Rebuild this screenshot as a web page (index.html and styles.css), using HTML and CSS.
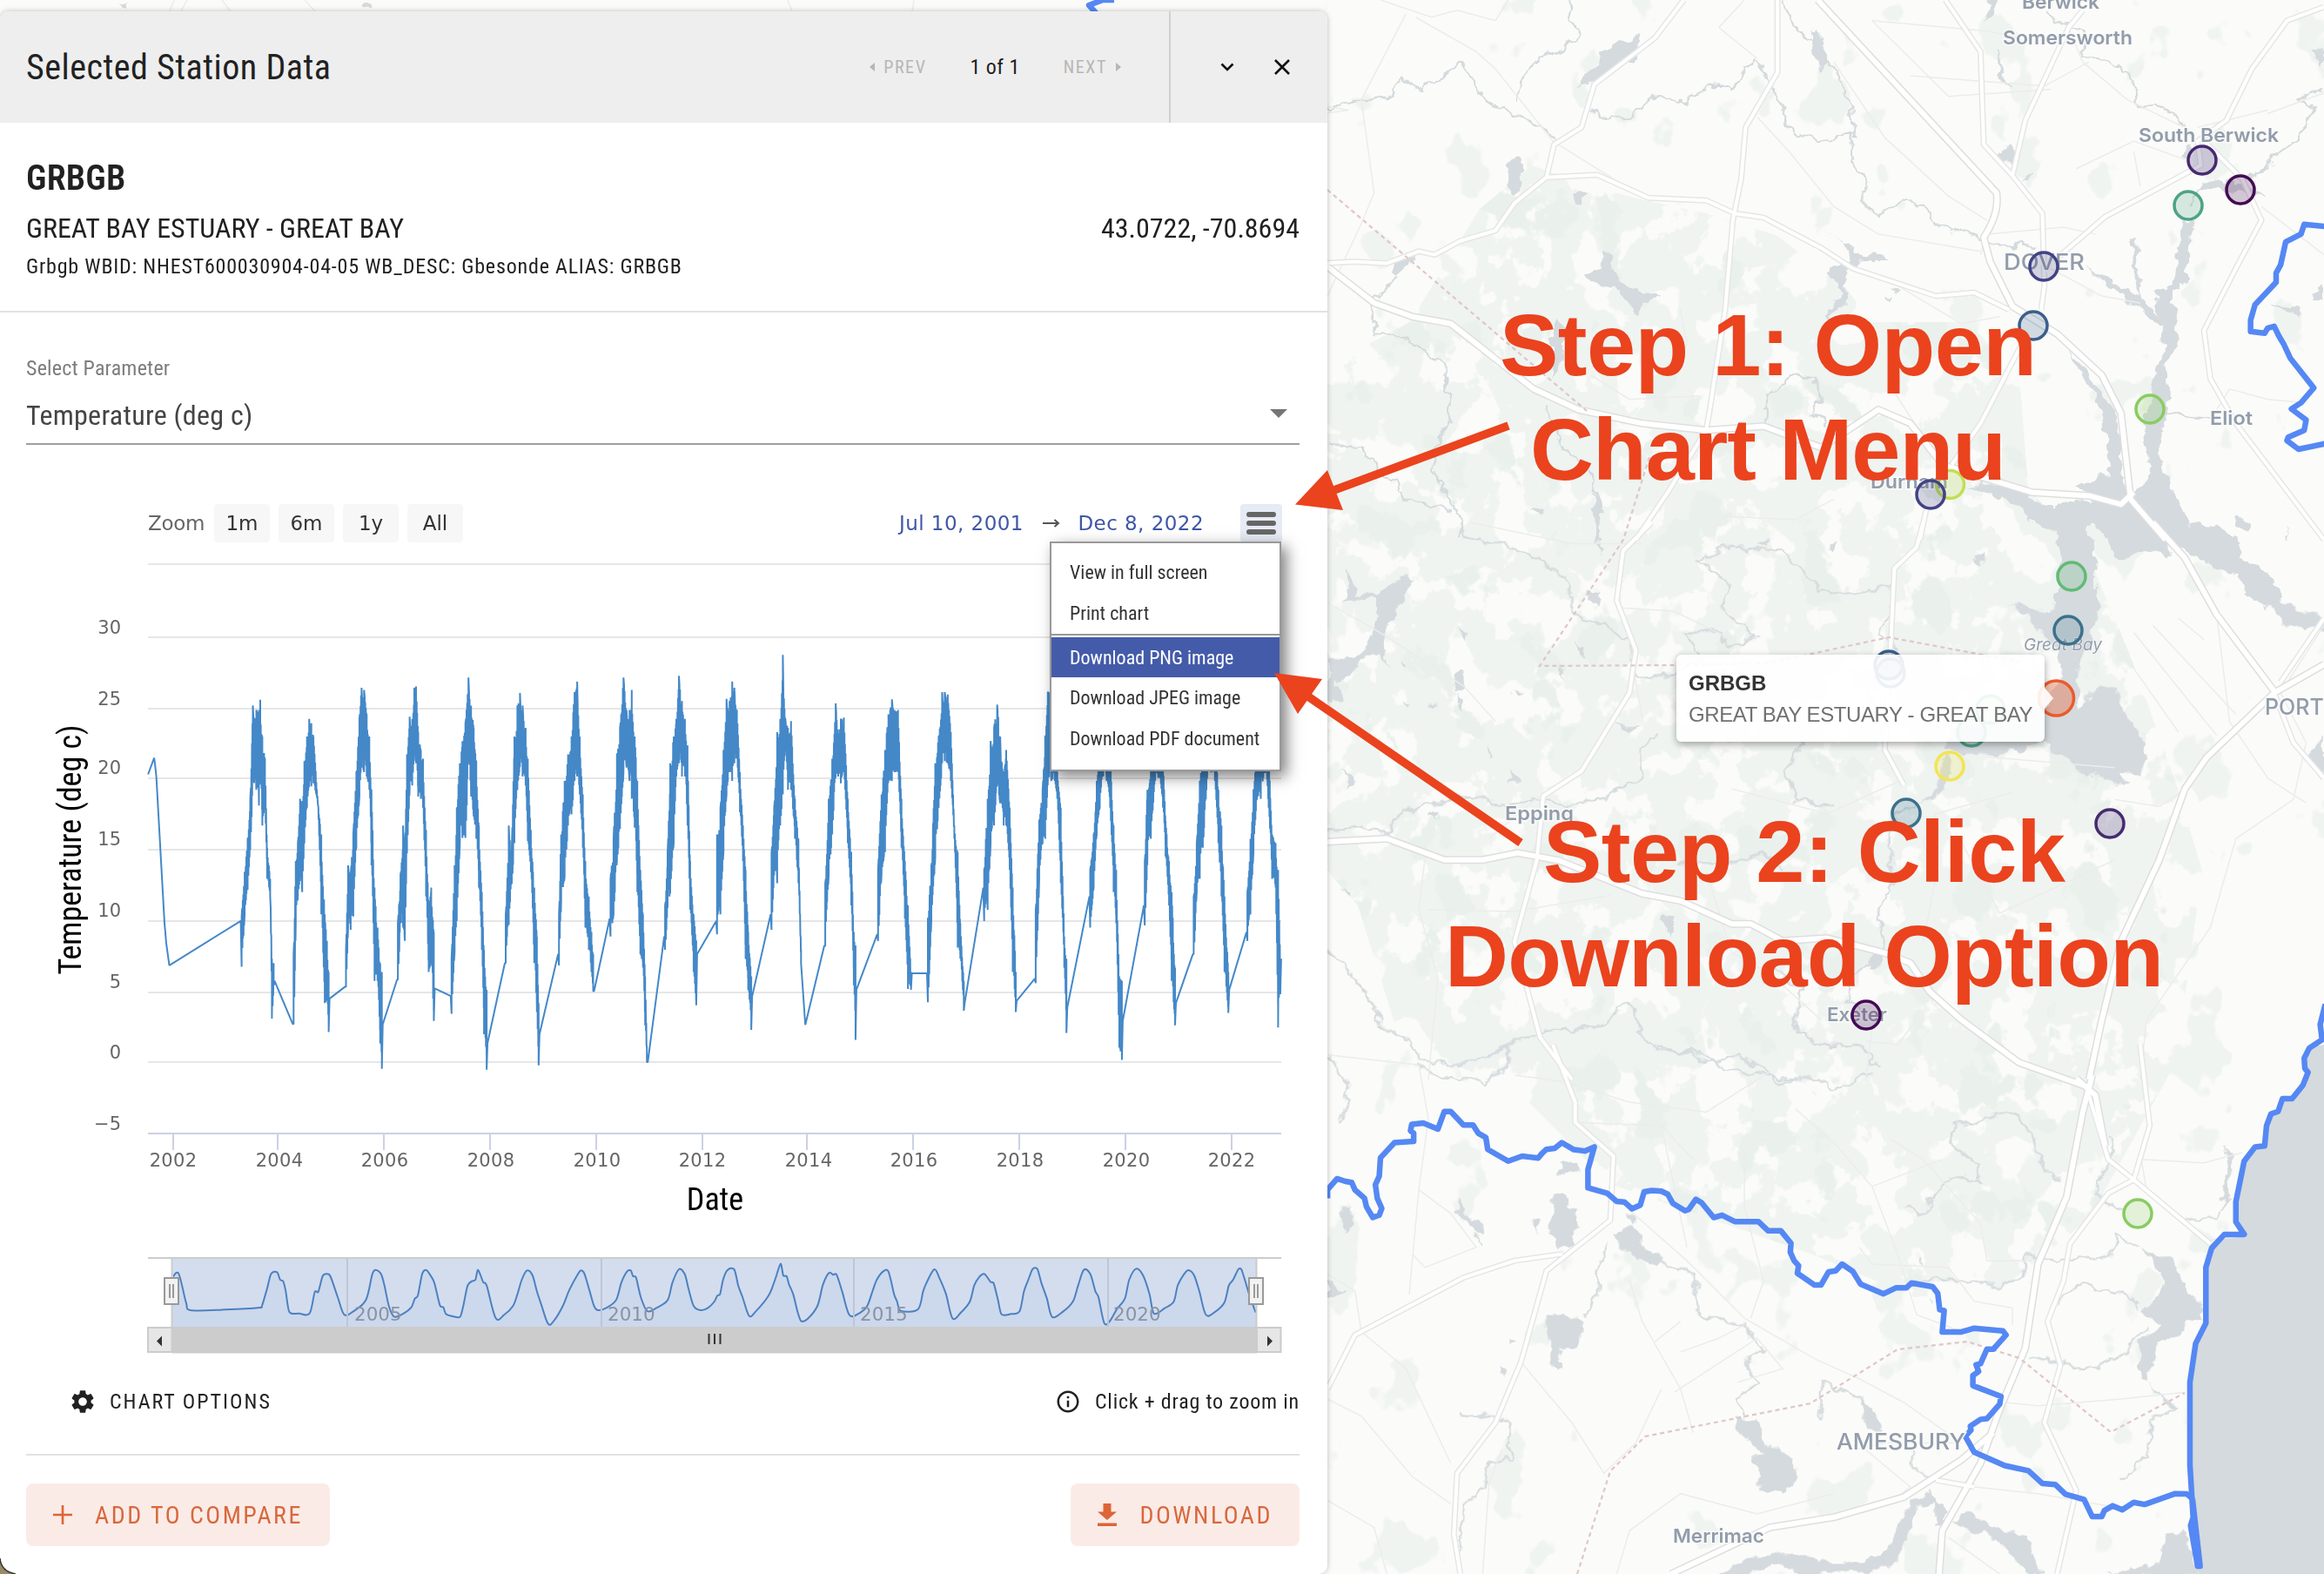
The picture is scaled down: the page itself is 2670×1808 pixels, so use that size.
FILE: index.html
```html
<!DOCTYPE html>
<html lang="en">
<head>
<meta charset="utf-8">
<title>Selected Station Data</title>
<link rel="stylesheet" href="styles.css">
</head>
<body>
<svg class="map" width="2670" height="1808" viewBox="0 0 2670 1808">
  <defs>
    <filter id="woods" x="0" y="0" width="100%" height="100%" color-interpolation-filters="sRGB">
      <feTurbulence type="fractalNoise" baseFrequency="0.021 0.018" numOctaves="5" seed="11"/>
      <feColorMatrix values="0 0 0 0 .937  0 0 0 0 .957  0 0 0 0 .945  26 0 0 0 -11.300"/>
    </filter>
    <filter id="thickets" x="0" y="0" width="100%" height="100%" color-interpolation-filters="sRGB">
      <feTurbulence type="fractalNoise" baseFrequency="0.016 0.014" numOctaves="5" seed="23"/>
      <feColorMatrix values="0 0 0 0 .918  0 0 0 0 .945  0 0 0 0 .925  24 0 0 0 -15.600"/>
    </filter>
    <filter id="glades" x="0" y="0" width="100%" height="100%" color-interpolation-filters="sRGB">
      <feTurbulence type="fractalNoise" baseFrequency="0.014 0.012" numOctaves="4" seed="4"/>
      <feColorMatrix values="0 0 0 0 .937  0 0 0 0 .957  0 0 0 0 .945  26 0 0 0 -17"/>
    </filter>
    <filter id="shore" filterUnits="userSpaceOnUse" x="0" y="0" width="2670" height="1808">
      <feTurbulence type="fractalNoise" baseFrequency="0.06" numOctaves="3" seed="5"/>
      <feDisplacementMap in="SourceGraphic" scale="16" xChannelSelector="R" yChannelSelector="G"/>
    </filter>
    <clipPath id="dense"><path d="M1525 420 1620 370 1700 240 1760 190 1830 215 1890 230 1960 245 2040 270 2120 330 2150 370 2260 370 2320 430 2330 560 2400 640 2450 760 2500 900 2530 1000 2500 1220 2400 1400 2300 1480 2200 1490 2080 1440 1850 1360 1740 1250 1610 1200 1560 1040 1525 1000z"/></clipPath>
  </defs>
  <rect width="2670" height="1808" fill="#fbfbf9"/>
  <rect x="1500" width="1170" height="1808" filter="url(#glades)"/>
  <g clip-path="url(#dense)"><rect x="1500" width="1170" height="1808" filter="url(#woods)"/><rect x="1500" width="1170" height="1808" filter="url(#thickets)"/></g>

  <path class="ocean" transform="translate(1520 1200) scale(.73341 .38773)" d="M1568 0 1550 5 1537 40 1543 82 1535 120 1518 160 1503 160 1496 198 1485 205 1478 240 1475 300 1460 303 1443 345 1430 465 1430 525 1443 562 1412 562 1392 603 1383 660 1383 825 1367 885 1358 1000 1358 1245 1362 1345 1372 1568 1568 1568z"/>
  <g class="water" filter="url(#shore)">
    <g transform="scale(.49744 .34435)"><path d="M280 0 298 0 295 30 285 20zM840 12 852 10 853 32 842 36z"/></g>
    <g transform="translate(1520 0) scale(.73341 .39541)">
      <path d="M485 105 497 98 490 170 465 190 440 235 400 250 410 220 428 190 440 150z"/>
      <path d="M445 730 470 825 500 850 528 865 500 880 495 915 470 870 455 830 430 830 410 790 435 780z"/>
      <path d="M360 930 380 960 375 1060 360 1100z"/>
      <path d="M298 465 310 462 313 490 303 560 292 570 290 490z"/>
      <path d="M762 80 775 90 790 180 785 205 770 170z"/>
      <path d="M110 760 140 735 135 765 115 800 105 790zM396 565 412 560 405 590 393 590z"/>
      <path d="M1065 445 1070 415 1080 440 1090 480 1070 475zM1040 0 1050 0 1050 40 1040 60zM1050 140 1055 150 1065 210 1078 240 1062 235z"/>
      <path d="M1548 150 1568 145 1568 200zM1545 850 1568 830 1568 870 1550 870z"/>
    </g>
    <g transform="translate(2050 100) scale(.3827)">
      <path d="M1195 395 1228 405 1215 470 1215 580 1185 605 1160 610 1160 650 1178 680 1180 780 1148 830 1152 930 1142 1020 1120 1080 1140 1150 1185 1250 1215 1310 1300 1318 1360 1355 1368 1415 1420 1440 1492 1510 1500 1570 1450 1570 1380 1520 1340 1450 1280 1440 1200 1400 1160 1365 1165 1412 1100 1390 1010 1418 980 1400 960 1335 925 1310 895 1330 935 1365 940 1570 812 1570 820 1480 830 1400 820 1330 775 1325 735 1300 700 1250 545 1192 600 1192 680 1200 760 1235 810 1260 840 1245 930 1235 870 1192 920 1190 950 1155 980 1160 970 1080 945 950 915 895 875 860 860 800 900 850 950 920 992 980 1012 1080 1020 1190 1060 1225 1085 1200 1100 1160 1075 1020 1108 920 1120 830 1142 780 1130 720 1060 665 1030 645 990 605 900 548 960 565 1040 615 1060 628 1040 455 1055 455 1068 640 1110 665 1132 690 1112 615 1150 598 1172 580z"/>
      <path d="M80 405 150 450 205 480 230 510 280 495 310 520 240 520 210 535 180 570 190 650 150 670 130 720 125 680 170 630 165 590 130 560 200 520 180 470z"/>
      <path d="M650 200 675 165 690 210 680 235 630 210zM710 285 745 255 735 275zM1250 290 1300 270 1390 300 1440 330 1380 320 1300 300 1250 315zM1200 170 1220 170 1220 210 1200 200zM300 630 325 620 315 645zM320 590 350 610 340 620zM1350 1290 1400 1310 1395 1330 1360 1320zM1495 1350 1508 1325 1500 1360zM570 1400 600 1400 590 1430zM130 1370 160 1350 145 1390zM1460 655 1560 665 1555 685 1480 665z"/>
    </g>
    <g transform="translate(1525 560) scale(.3827)">
      <path d="M60 240 80 280 90 320 160 322 190 290 240 268 262 275 230 310 225 345 190 400 172 445 188 540 165 500 110 512 60 560 20 580 50 640 0 640 0 515 60 520 110 490 130 430 150 380 140 335 90 332 55 350 60 300z"/>
      <path d="M398 422 428 440 405 462zM370 555 405 545 412 600 385 615zM550 845 582 880 538 885zM860 690 900 720 947 715 900 738zM780 320 822 305 812 362 780 345zM608 70 652 58 640 85zM798 15 822 50 815 205 808 160zM1005 1290 1045 1285 1030 1340zM300 660 335 645 320 665zM550 615 590 615 565 630zM230 520 240 535 228 540zM395 620 405 680 385 650zM230 650 260 655 240 665zM700 530 718 540 712 568zM750 470 772 475 770 515 755 500zM300 990 335 970 325 995zM1300 170 1330 150 1320 180zM40 1215 75 1210 60 1225zM45 840 75 880 70 910 55 870zM480 800 492 770 490 805z"/>
    </g>
    <g transform="translate(1520 600) scale(.73341 .40816)">
      <path d="M1145 225 1213 225 1216 240 1205 330 1180 400 1185 520 1200 480 1215 465 1245 470 1252 530 1292 620 1282 710 1250 705 1262 740 1240 735 1190 705 1150 650 1130 615 1060 655 1000 650 975 640 985 590 1080 545 1130 520 1160 430 1150 360 1115 290 1080 235 1140 250z"/>
      <path d="M1480 230 1515 230 1568 270 1568 310 1500 280z"/>
      <path d="M975 650 985 700 968 770 930 790 960 760 965 700z"/>
      <path d="M860 1210 875 1220 870 1250 855 1260zM1020 100 1035 95 1030 130zM790 70 800 45 800 75zM1545 660 1568 600 1568 720 1550 700z"/>
    </g>
    <g transform="translate(1520 1200) scale(.73341 .38773)">
      <path d="M370 350 400 345 405 370 370 382zM360 445 375 440 385 475 400 490 395 590 370 600 355 560zM213 450 222 500 245 520 252 560 235 550 208 490zM328 520 336 515 336 560 328 550z"/>
      <path d="M350 795 375 800 410 820 400 880 375 905 375 955 355 950 360 880 350 840zM7 700 35 730 20 750 7 750zM25 475 45 480 43 540 35 560z"/>
      <path d="M450 560 480 540 500 560 500 600 530 630 525 660 480 620zM475 490 495 530 485 540zM278 960 288 965 285 990zM295 865 310 875 300 885z"/>
      <path d="M640 1100 680 1110 700 1190 740 1230 742 1280 720 1330 685 1320 675 1220 695 1215 650 1150zM835 1040 860 1080 875 1145 855 1140z"/>
      <path d="M1280 610 1330 640 1350 700 1350 740 1380 780 1378 820 1350 815 1345 860 1305 890 1290 1000 1340 1080 1330 1080 1280 980 1280 880 1310 820 1285 790 1310 740 1315 680z"/>
      <path d="M620 1575 660 1520 720 1505 780 1530 850 1530 890 1480 910 1380 950 1325 975 1360 975 1430 960 1420 960 1350 930 1370 900 1530 860 1560 750 1575 710 1535 660 1575zM985 1420 1010 1390 1060 1430 1100 1450 1125 1575 1110 1575 1070 1500 1040 1450zM1320 1460 1350 1440 1375 1575 1230 1575 1310 1530z"/>
      <path d="M1410 300 1425 320 1415 480 1405 460 1415 380zM928 640 936 645 934 660zM955 740 960 760 955 765z"/>
    </g>
  </g>

  <g class="streams" filter="url(#shore)">
    <g transform="translate(1520 0) scale(.73341 .39541)">
      <path d="M7 320 40 300 70 285 110 280 120 225 155 260 190 215 218 175 240 260 270 310 297 330 330 350 363 410M385 0 390 60 400 90 375 140 330 180 310 240 300 290"/>
      <path d="M415 320 440 340 475 350 520 280 545 280 570 305 600 250 640 250 675 175 700 240 720 320 735 390 770 410 830 390 830 460 850 530 850 600 870 625 910 580 940 600 960 650 1020 680 1060 710 1120 720"/>
      <path d="M720 0 740 80 775 130 800 210 820 260 835 400M80 970 80 870 120 800M80 970 130 980 190 1060 200 1220 170 1300 180 1400 215 1500 210 1568"/>
      <path d="M1135 30 1150 70 1190 90 1190 160 1240 190 1270 230 1275 300 1330 320 1360 400M1568 260 1530 290 1550 320 1530 400 1500 440 1470 500 1380 540 1358 600M1320 1200 1390 1210"/>
      <path d="M690 1240 695 1150 740 1085 770 1100 780 1160 760 1200 790 1230M350 1180 370 1290 420 1380 430 1450 430 1568M7 1290 60 1300 100 1380 130 1450 200 1480"/>
    </g>
    <g transform="translate(1520 600) scale(.73341 .40816)">
      <path d="M215 0 215 40 270 55 320 90 380 150 390 250 450 300 480 340 490 430 550 430 590 380 570 310 620 310 640 350 680 320 620 240 640 180 590 110 630 70 720 80 780 190 840 200 890 180 890 240 870 310 900 360"/>
      <path d="M7 870 50 860 100 870 130 810 190 780 240 770 290 800 340 780 380 800 430 780 500 720 500 640 520 600M750 620 725 700 740 780 800 800M930 790 890 830 890 920 890 1020 870 1100 880 1200 830 1280 820 1350 860 1390"/>
      <path d="M560 960 630 960 690 930 720 980M290 1470 350 1430 440 1420 480 1350 490 1410 520 1480 600 1500 640 1540 740 1568M700 1250 750 1310 740 1420 770 1470 840 1470 870 1530M7 1200 80 1350 90 1420 130 1450 150 1510 200 1530 260 1500 290 1470"/>
    </g>
    <g transform="translate(1520 1200) scale(.73341 .38773)">
      <path d="M520 0 560 20 600 50 650 35 690 65 710 110 760 95 800 130 860 85M7 30 40 130 40 180 20 240M150 60 180 105 250 110 290 60 290 0"/>
      <path d="M500 600 530 650 580 680 590 800 660 830 690 900 660 950 680 1000 650 1050 660 1100M240 560 250 600M440 590 430 680 430 740 410 800M215 1090 250 1100 290 1110 295 1225 260 1240 250 1310 220 1360 215 1500"/>
      <path d="M910 485 940 500 980 390 1030 405 1030 360 990 310 990 240 1030 230 1050 205 1090 205 1120 300 1130 370 1160 405M925 710 960 690 1060 720 1100 690 1100 620 1150 640 1240 620 1240 560 1280 600M1150 770 1180 710 1260 740 1280 780M1110 920 1190 965 1250 920 1290 840M1240 280 1210 450 1260 500M1340 520 1400 510 1420 460M1340 1080 1300 1100 1290 1230 1250 1280M780 1000 820 1030 845 1060M925 1200 920 1250 960 1290M780 1000 780 1110"/>
    </g>
  </g>

  <g class="lanes">
    <g transform="translate(1520 0) scale(.73341 .39541)">
      <path d="M90 0 170 50 210 30 270 60 290 0M130 40 60 290 80 560 60 650 7 860M145 50 240 150 270 200 360 410 490 560M7 310 40 320 0 330M620 80 660 0M620 80 680 170M680 340 730 440 800 600 870 680 1030 730"/>
      <path d="M860 60 1040 90 1090 110M860 60 980 280 1140 260M1170 90 1190 180 1260 290 1360 380M800 180 880 400 980 570 1040 640M920 220 1130 250 1200 180M1180 490 1270 410 1360 470M1270 440 1280 540M1480 330 1568 270M1370 370 1480 320"/>
      <path d="M1030 740 1040 680 1160 660 1210 680M1130 770 1220 860 1280 880M1400 1190 1420 1130 1480 1160 1540 1170M1470 600 1568 740M1100 960 1030 1240 985 1350M895 1140 930 1240M560 900 570 1000 540 1100M860 800 900 830 1000 940 1060 920M420 1090 480 1160 590 1150M590 1568 630 1500 740 1510 800 1450"/>
    </g>
    <g transform="translate(1520 600) scale(.73341 .40816)">
      <path d="M0 220 80 300 220 460 270 560M230 0 390 60 500 60M460 240 550 250 640 330M160 940 150 1090 180 1280 165 1568M165 1090 300 1095 450 1050M340 770 260 890M1080 760 960 820 940 900 960 1000 940 1180M1240 780 1310 800 1360 740M1040 660 1240 690M1400 260 1420 560 1480 720 1540 790M1568 290 1500 480 1540 620 1520 780 1430 890 1390 1140 1290 1400 1280 1568"/>
      <path d="M1270 310 1400 600M1300 290 1430 540M1340 270 1380 330M1250 360 1340 590M930 1400 900 1470 850 1460M600 980 640 1210 700 1270 780 1400M860 1430 850 1568M480 350 500 550M640 750 790 820 900 730M1000 900 1060 1100 1240 950"/>
    </g>
    <g transform="translate(1520 1200) scale(.73341 .38773)">
      <path d="M7 30 150 60 165 220 150 430 135 740M140 620 160 660 240 600 200 500 150 430M7 680 50 730 60 850 130 960 200 1240M7 1050 60 1100 140 1280 200 1360M300 90 380 110 480 170 600 200 700 80M390 230 530 240 580 340M530 240 570 600M480 490 570 640 660 810 770 930M480 700 500 820 560 1020 580 1150M730 250 660 310 660 480 690 700 670 810M520 880 560 820M560 910 620 870 660 830M550 1030 680 870 720 960 650 1000M310 940 390 1120 440 1270 490 1180 530 1020"/>
      <path d="M740 190 800 290 860 420 900 620 930 800 1000 850M860 420 970 340M890 280 940 340 1030 530 1040 640 1110 640M770 930 840 990 910 1060 1000 1180M840 600 860 650 980 660 1020 760 1080 780 1080 830M7 1350 80 1430 100 1568M250 1568 260 1300 280 1200M460 1568 480 1440 560 1330 680 1390 800 1330M1280 340 1380 350 1440 320M1280 320 1290 430M1380 580 1430 570M1070 1060 1120 1070 1250 1050 1350 1030M1000 1180 880 1180 830 1200M850 1200 920 1310 900 1340M1020 1310 1120 1330 1240 1370M980 1460 1060 1568"/>
    </g>
    <path d="M195 13 200 0M208 13 215 0M905 0 910 13M1050 0 1048 13M255 0 265 13M350 0 362 13"/>
  </g>

  <g id="roads">
    <g transform="translate(1520 0) scale(.73341 .39541)">
      <path class="road minor" d="M0 765 50 760 100 765 150 730 175 740 215 700 270 670 300 590 350 515 430 508 510 575 600 582 645 620 690 632 780 720 830 780 960 860 1020 850 1075 900M565 0 520 110 425 245 405 370 362 420 350 515M712 0 712 210 662 370 655 520 642 640 630 900 605 1200 600 1250 540 1430 490 1568M975 0 1030 150 1035 420 1080 510 1127 620 1130 830 1125 900M1190 30 1168 80 1100 350 1080 510M1568 20 1510 60 1455 200 1415 350 1370 410 1375 480 1225 630 1150 750M1375 400 1440 520 1470 640 1430 780 1380 960 1390 1100 1430 1230 1568 1568M1100 980 1030 1230 985 1350M945 1480 935 1568"/>
      <path class="road" d="M0 765 80 880 140 920 200 940 330 1130 400 1190 500 1230 600 1250 690 1238 780 1300 830 1240 870 1190 920 1230 970 1350 1110 1430 1200 1440 1250 1465 1270 1430"/>
      <path class="road" d="M775 0 1055 560Q1060 620 1035 690L1045 760 1080 890 1150 970 1220 1090 1250 1200 1265 1450 1320 1568"/>
    </g>
    <g transform="translate(1520 600) scale(.73341 .40816)">
      <path class="road minor" d="M515 0 470 80 460 220 490 360 480 480 405 700 345 770 335 950 300 1180 340 1450 390 1568M940 0 930 70 895 130 890 320 880 640 910 740M1490 480 1520 620 1568 720M1568 270 1500 450"/>
      <path class="road" d="M0 900 100 890 190 950 250 950 305 930 370 952 500 1045 560 1065 640 1130 670 1130 720 1178 790 1170 880 1212 920 1240 950 1320 1000 1400 1090 1520 1200 1590"/>
      <path class="road" d="M1300 0 1350 100 1400 260 1490 475M1568 400 1490 480 1385 660 1350 750 1310 950 1250 1180 1220 1400 1200 1568"/>
    </g>
    <g transform="translate(1520 1200) scale(.73341 .38773)">
      <path class="road minor" d="M360 0 395 170 395 230 455 330 450 520 350 670 310 940 270 1120 210 1270 205 1450 215 1568M375 620 300 640 220 690 50 860 7 1020M1280 0 1295 240 1270 400 1230 440 1170 590 1160 700 1135 820 1155 950 1130 1120 1180 1320 1150 1568M1195 120 1230 340 1270 400 1390 590M960 1290 1020 1310"/>
      <path class="road" d="M545 1568 700 1430 800 1400 910 1340 1000 1230 1050 1150"/>
      <path class="road" d="M1205 90 1190 200 1165 450 1120 650 1100 900 1060 1080 1030 1240 970 1440 965 1568M1180 100 1210 150 1225 300"/>
    </g>
  </g>

  <g class="county">
    <path d="M1525 218 1645 320 1823 472M1895 525 1865 620 1769 765 1926 764 2030 762 2170 732 2320 760M1812 1808 1850 1690 1890 1650 2080 1612 2180 1550 2260 1541 2320 1560 2425 1645 2510 1600"/>
  </g>
  <g class="boundary">
    <path d="M1280 0 1267 0 1251 6 1262 18"/>
    <g transform="translate(1520 0) scale(.73341 .39541)"><path d="M1580 660 1537 652 1532 680 1508 703 1500 770 1493 793 1493 820 1460 885 1453 930 1453 963 1475 968 1480 953 1490 948 1497 975 1505 1000 1515 1040 1552 1127 1532 1170 1517 1188 1540 1220 1537 1250 1512 1270 1510 1280 1528 1305 1580 1285"/></g>
    <g transform="translate(1520 1200) scale(.73341 .38773)">
      <path d="M7 455 7 430 22 397 35 405 45 408 50 430 65 455 68 480 78 512 88 505 92 485 85 455 82 415 88 390 90 335 112 290 142 286 142 262 137 255 139 236 157 232 180 250 190 198 200 198 220 238 235 238 243 262 255 275 258 310 290 345 312 330 337 336 343 322 350 310 363 307 374 290 393 311 410 315 425 303 415 370 415 424 445 440 460 464 472 466 484 486 497 475 503 436 515 432 530 434 540 443 548 470 567 492 573 488 584 458 593 468 612 512 625 505 645 524 682 524 697 551 717 551 733 588 732 615 738 640 745 655 743 677 770 712 780 712 792 673 803 670 813 650 830 672 842 709 878 738 898 720 914 720 922 706 955 717 963 737 966 785 973 788 970 851 1000 851 1020 840 1065 848 1070 860 1050 902 1040 902 1030 945 1023 948 1027 968 1018 980 1018 1010 1062 1042 1060 1065 1040 1108 1030 1110 1014 1130 1015 1142 1006 1160 1020 1207 1068 1247 1105 1262 1127 1300 1147 1303 1163 1332 1192 1347 1205 1398 1220 1398 1224 1380 1237 1366 1252 1378 1270 1356 1287 1362 1335 1330 1353 1331 1362 1345"/>
      <path d="M1570 -120 1562 -60 1565 -15 1545 10 1537 40 1538 70 1543 82 1535 120 1518 160 1503 160 1496 198 1485 205 1478 240 1475 300 1460 303 1443 345 1430 465 1430 525 1443 562 1412 562 1392 603 1383 660 1383 825 1367 885 1358 1000 1358 1245 1363 1400 1359 1425 1370 1545 1374 1545 1362 1345"/>
    </g>
  </g>

  <g class="place">
    <text x="2323" y="10" textLength="89" lengthAdjust="spacingAndGlyphs">Berwick</text>
    <text x="2301" y="51" textLength="149" lengthAdjust="spacingAndGlyphs">Somersworth</text>
    <text x="2457" y="163" textLength="161" lengthAdjust="spacingAndGlyphs">South Berwick</text>
    <text class="city" x="2302" y="310" textLength="93" lengthAdjust="spacingAndGlyphs">DOVER</text>
    <text x="2539" y="488" textLength="49" lengthAdjust="spacingAndGlyphs">Eliot</text>
    <text x="2149" y="561" textLength="89" lengthAdjust="spacingAndGlyphs">Durham</text>
    <text class="bay" x="2325" y="747" textLength="90">Great Bay</text>
    <text x="1729" y="942" textLength="79" lengthAdjust="spacingAndGlyphs">Epping</text>
    <text class="city" x="2602" y="821">PORTSMOUTH</text>
    <text x="2099" y="1173" textLength="69" lengthAdjust="spacingAndGlyphs">Exeter</text>
    <text class="city" x="2110" y="1665" textLength="148" lengthAdjust="spacingAndGlyphs">AMESBURY</text>
    <text x="1922" y="1772" textLength="105" lengthAdjust="spacingAndGlyphs">Merrimac</text>
  </g>

  <g class="stations">
    <circle cx="2530" cy="184" r="16" color="#462a70"/>
    <circle cx="2574" cy="218" r="16" color="#440a54"/>
    <circle cx="2514" cy="236" r="16" color="#4da387"/>
    <circle cx="2348" cy="306" r="16" color="#424384"/>
    <circle cx="2336" cy="374" r="16" color="#3b5f8b"/>
    <circle cx="2470" cy="470" r="16" color="#89cc62"/>
    <circle cx="2240.500" cy="556.500" r="16" color="#c3de52"/>
    <circle cx="2218" cy="568" r="16" color="#424384"/>
    <circle cx="2380" cy="662" r="16" color="#62ba76"/>
    <circle cx="2376" cy="724" r="16" color="#3c718b"/>
    <circle cx="2170" cy="764" r="16" color="#3b5f8b"/>
    <circle cx="2172" cy="773" r="16" color="#3c718b"/>
    <circle cx="2287" cy="815" r="16" color="#62ba76"/>
    <circle cx="2265" cy="841" r="16" color="#4da387"/>
    <circle cx="2240" cy="880" r="16" color="#f2e455"/>
    <circle cx="2190" cy="934" r="16" color="#3c718b"/>
    <circle cx="2424" cy="946" r="16" color="#462a70"/>
    <circle cx="2144" cy="1166" r="16" color="#440a54"/>
    <circle cx="2456" cy="1394" r="16" color="#89cc62"/>
    <circle class="chosen" cx="2362.500" cy="802" r="20" color="#ec5a2b"/>
  </g>
</svg>

<div class="station-tip">
  <strong>GRBGB</strong>
  <span>GREAT BAY ESTUARY - GREAT BAY</span>
</div>

<main class="panel">
  <header class="panel-head">
    <h1>Selected Station Data</h1>
    <nav class="pager">
      <button class="step"><svg width="6" height="10" viewBox="0 0 6 10"><path d="M6 0v10L0 5z"/></svg><span>PREV</span></button>
      <span class="count">1 of 1</span>
      <button class="step"><span>NEXT</span><svg width="6" height="10" viewBox="0 0 6 10"><path d="M0 0v10l6-5z"/></svg></button>
    </nav>
    <div class="window-tools">
      <svg width="20" height="20" viewBox="0 0 20 20"><path d="M3.500 6.500 10 13l6.500-6.500"/></svg>
      <svg width="20" height="20" viewBox="0 0 20 20"><path d="M2 2l16 16M18 2 2 18"/></svg>
    </div>
  </header>

  <section class="station">
    <h2>GRBGB</h2>
    <div class="station-row"><span class="site">GREAT BAY ESTUARY - GREAT BAY</span><span class="coords">43.0722, -70.8694</span></div>
    <p>Grbgb WBID: NHEST600030904-04-05 WB_DESC: Gbesonde ALIAS: GRBGB</p>
  </section>

  <section class="parameter">
    <label>Select Parameter</label>
    <div class="select"><span>Temperature (deg c)</span><svg width="20" height="10" viewBox="0 0 20 10"><path d="M0 0h20L10 10z"/></svg></div>
  </section>

  <div class="chart-tools">
    <span class="zoom-label">Zoom</span>
    <div class="zoom-set"><button>1m</button><button>6m</button><button>1y</button><button>All</button></div>
    <div class="range"><span>Jul 10, 2001</span><svg width="20" height="12" viewBox="0 0 20 12"><path d="M0 6h18M13.500 2 18 6l-4.500 4"/></svg><span>Dec 8, 2022</span></div>
    <div class="export">
      <button class="burger"><i></i><i></i><i></i></button>
      <ul class="menu">
        <li>View in full screen</li>
        <li>Print chart</li>
        <li class="rule"></li>
        <li class="active">Download PNG image</li>
        <li>Download JPEG image</li>
        <li>Download PDF document</li>
      </ul>
    </div>
  </div>

  <svg class="chart" width="1525" height="937" viewBox="0 623 1525 937">
    <path class="grid" d="M170 648H1472M170 732H1472M170 814H1472M170 894H1472M170 976H1472M170 1058H1472M170 1140H1472M170 1220H1472"/>
    <path class="axis" d="M170 1302H1472M199 1302v19M319 1302v19M441 1302v19M563 1302v19M685 1302v19M807 1302v19M927 1302v19M1049 1302v19M1171 1302v19M1293 1302v19M1415 1302v19"/>
    <g class="ticks y"><text x="139" y="728">30</text><text x="139" y="810">25</text><text x="139" y="889">20</text><text x="139" y="971">15</text><text x="139" y="1053">10</text><text x="139" y="1135">5</text><text x="139" y="1216">0</text><text x="139" y="1298">−5</text></g>
    <g class="ticks x"><text x="199" y="1340">2002</text><text x="321" y="1340">2004</text><text x="442" y="1340">2006</text><text x="564" y="1340">2008</text><text x="686" y="1340">2010</text><text x="807" y="1340">2012</text><text x="929" y="1340">2014</text><text x="1050" y="1340">2016</text><text x="1172" y="1340">2018</text><text x="1294" y="1340">2020</text><text x="1415" y="1340">2022</text></g>
    <text class="axis-title" transform="translate(92.5 976) rotate(-90)">Temperature (deg c)</text>
    <text class="axis-title" x="821.5" y="1389.500">Date</text>
    <path id="series" class="series"/>

    <path id="nav-area" class="nav-area"/>
    <path id="nav-line" class="nav-line"/>
    <path class="nav-grid" d="M399 1446v78M691 1446v78M981 1446v78M1273 1446v78"/>
    <g class="nav-years"><text x="407" y="1517">2005</text><text x="698" y="1517">2010</text><text x="988" y="1517">2015</text><text x="1279" y="1517">2020</text></g>
    <rect class="nav-mask" x="198" y="1446" width="1245.500" height="78"/>
    <path class="nav-frame" d="M170 1445H1472M197.500 1445v79M1443.500 1445v79"/>
    <rect x="198" y="1524" width="1246" height="30.500" fill="#ccc"/>
    <g class="nav-button"><rect x="170" y="1525" width="27.500" height="28"/><rect x="1444" y="1525" width="27.500" height="28"/></g>
    <path d="M186 1534.500v12l-6-6zM1456 1534.500v12l6-6z" fill="#333"/>
    <path d="M814.500 1532v12M821 1532v12M827.500 1532v12" stroke="#333" stroke-width="2"/>
    <g class="handle"><rect x="189" y="1468" width="16" height="30"/><path d="M195 1475v16M199 1475v16"/><rect x="1435" y="1468" width="16" height="30"/><path d="M1441 1475v16M1445 1475v16"/></g>
  </svg>

  <div class="chart-foot">
    <button class="options"><svg width="32" height="32" viewBox="0 0 24 24"><path d="M19.140 12.940c.04-.3.06-.61.06-.94 0-.32-.02-.64-.07-.94l2.030-1.580c.18-.14.23-.41.12-.61l-1.920-3.320c-.12-.22-.37-.29-.59-.22l-2.390.96c-.5-.38-1.030-.7-1.620-.94l-.36-2.540c-.04-.24-.24-.41-.48-.41h-3.840c-.24 0-.43.17-.47.41l-.36 2.540c-.59.24-1.130.57-1.620.94l-2.390-.96c-.22-.08-.47 0-.59.22L2.740 8.870c-.12.21-.08.47.12.61l2.030 1.580c-.05.3-.09.63-.09.94s.02.64.07.94l-2.030 1.580c-.18.14-.23.41-.12.61l1.920 3.320c.12.22.37.29.59.22l2.390-.96c.5.38 1.030.7 1.620.94l.36 2.540c.05.24.24.41.48.41h3.840c.24 0 .44-.17.47-.41l.36-2.540c.59-.24 1.130-.56 1.620-.94l2.390.96c.22.08.47 0 .59-.22l1.920-3.320c.12-.22.07-.47-.12-.61l-2.010-1.580zM12 15.600c-1.980 0-3.600-1.620-3.600-3.600s1.620-3.600 3.600-3.600 3.600 1.620 3.600 3.600-1.620 3.600-3.600 3.600z"/></svg><span>CHART OPTIONS</span></button>
    <div class="hint"><svg width="30" height="30" viewBox="0 0 24 24"><path d="M11 17h2v-6h-2v6zm1-15C6.480 2 2 6.480 2 12s4.480 10 10 10 10-4.480 10-10S17.520 2 12 2zm0 18c-4.410 0-8-3.590-8-8s3.590-8 8-8 8 3.590 8 8-3.590 8-8 8zM11 9h2V7h-2v2z"/></svg><span>Click + drag to zoom in</span></div>
  </div>

  <footer class="actions">
    <button><svg width="22" height="22" viewBox="0 0 22 22"><path d="M9.700 0h2.600v9.700H22v2.600h-9.700V22H9.700v-9.700H0V9.700h9.700z"/></svg><span class="compare-text">ADD TO COMPARE</span></button>
    <button class="download"><svg width="22" height="26" viewBox="0 0 22 26"><path d="M6.500 0h9v9.500H22L11 19 0 9.500h6.500zM0 22.500h22V26H0z"/></svg><span class="download-text">DOWNLOAD</span></button>
  </footer>
</main>
<svg class="corner" width="18" height="18" viewBox="0 0 18 18"><path d="M0 0Q1 15 18 18H0z" fill="#9b8a66"/><path d="M0 0Q1 15 18 18" fill="none" stroke="#333" stroke-width="1.500"/></svg>

<svg class="notes" width="2670" height="1808" viewBox="0 0 2670 1808">
  <path d="M1733 489 1530 564M1747 968 1500 798" stroke="#ea431e" stroke-width="9.500"/>
  <path d="M1488 579.500 1525 540 1543 586zM1464 773 1519 780 1491 820z"/>
  <g class="note-text">
    <text x="1723" y="431" textLength="617">Step 1: Open</text>
    <text x="1758" y="551" textLength="547">Chart Menu</text>
    <text x="1773" y="1013" textLength="600">Step 2: Click</text>
    <text x="1660" y="1133" textLength="826">Download Option</text>
  </g>
</svg>
<script src="chart.js"></script>
</body>
</html>
```
FILE: styles.css
```css
* { box-sizing: border-box; }
body {
  display: flow-root;
  margin: 0;
  width: 2670px;
  height: 1808px;
  overflow: hidden;
  position: relative;
  background: #fbfbf9;
  color: #212121;
  font-family: "Roboto Condensed", Roboto, "Liberation Sans", sans-serif;
  font-stretch: 75%;
}
button { font: inherit; color: inherit; border: 0; padding: 0; background: none; }
h1, h2, p, ul { margin: 0; padding: 0; font-weight: 400; }
svg { display: block; flex: none; }

.map, .notes { position: absolute; left: 0; top: 0; }
.map path { vector-effect: non-scaling-stroke; }
.water, .ocean { fill: #d4dadd; }
.streams { fill: none; stroke: #d4dadd; stroke-width: 2.5; stroke-linejoin: round; }
.lanes { fill: none; stroke: #ececec; stroke-width: 1.5; }
.road { fill: none; stroke: #fff; stroke-width: 6; stroke-linejoin: round; }
.road.case { stroke: #dedede; stroke-width: 9; }
.road.minor { stroke-width: 4; }
.road.minor.case { stroke: #e6e6e6; stroke-width: 7; }
.county { fill: none; stroke: #e0c6c8; stroke-width: 2.2; stroke-dasharray: 5 4; }
.boundary { fill: none; stroke: #5588f4; stroke-width: 6.5; stroke-linejoin: round; }
.place { font: 600 22px Inter, "Open Sans", sans-serif; fill: #929cab; stroke: #fbfbf9; stroke-width: 3px; paint-order: stroke; }
.place .city { font-size: 25px; font-weight: 500; }
.place .bay { font-size: 19px; font-style: italic; font-weight: 400; stroke-width: 1px; }
.stations circle { fill: currentColor; fill-opacity: .22; stroke: currentColor; stroke-width: 3.5; }
.stations .chosen { fill-opacity: .35; }

.station-tip {
  position: absolute; left: 1926px; top: 752px; width: 423px; height: 100px;
  display: flex; flex-direction: column; gap: 6px; padding: 18px 14px;
  background: rgba(255, 255, 255, .9); border-radius: 6px;
  box-shadow: 0 3px 8px rgba(0, 0, 0, .35);
  font: 24px/30px "Liberation Sans", Arial, sans-serif; white-space: nowrap; color: #707070;
}
.station-tip strong { color: #333; }
.station-tip span { letter-spacing: -.4px; }
.station-tip::after {
  content: ""; position: absolute; left: 100%; top: 38px;
  border: 12px solid transparent; border-left: 10px solid rgba(255, 255, 255, .9); border-right: 0;
}

.panel {
  position: relative; display: flex; flex-direction: column;
  width: 1525px; height: 1795px; margin-top: 13px;
  background: #fff; border-radius: 10px; box-shadow: 0 0 6px rgba(0, 0, 0, .25);
}
.panel-head { display: flex; align-items: center; height: 128px; padding-left: 30px; background: #eee; border-radius: 10px 10px 0 0; }
.panel-head h1 { font-size: 40px; letter-spacing: .5px; margin-right: auto; }
.pager { display: flex; align-items: center; gap: 50px; margin-right: 55px; }
.step { display: flex; align-items: center; gap: 10px; font-size: 20px; letter-spacing: 1.6px; color: #b6b6b6; fill: currentColor; }
.count { font-size: 24px; letter-spacing: .5px; }
.window-tools { display: flex; align-items: center; align-self: stretch; gap: 43px; width: 182px; padding-left: 55px; border-left: 2px solid #d0d0d0; }
.window-tools svg { fill: none; stroke: #111; stroke-width: 2.6; }

.station { padding: 40px 32px 35px 30px; border-bottom: 2px solid #e2e2e2; }
.station h2 { font-size: 40px; line-height: 48px; font-weight: 600; letter-spacing: .2px; }
.station-row { display: flex; justify-content: space-between; margin-top: 11px; font-size: 32px; line-height: 44px; }
.station p { margin-top: 6px; font-size: 24px; line-height: 32px; letter-spacing: .8px; }

.parameter { margin: 48px 32px 0 30px; }
.parameter label { display: block; font-size: 24px; line-height: 32px; color: #7d7d7d; letter-spacing: .2px; }
.select { display: flex; align-items: center; justify-content: space-between; height: 56px; margin-top: 16px; padding: 0 14px 10px 0; border-bottom: 2px solid #a0a0a0; font-size: 32px; letter-spacing: .28px; color: #444; }
.select svg { fill: #757575; margin-top: -4px; }

.chart-tools { display: flex; align-items: center; height: 44px; margin: 68px 52px 0 170px; font: 23px "DejaVu Sans", sans-serif; color: #666; }
.zoom-label { width: 76px; letter-spacing: -.3px; }
.zoom-set { display: flex; gap: 10px; }
.zoom-set button { width: 64px; height: 44px; border-radius: 4px; background: #f7f7f7; color: #333; }
.range { display: flex; align-items: center; justify-content: space-between; width: 350px; margin: 0 42px 0 auto; color: #3f57a6; letter-spacing: .45px; white-space: nowrap; }
.range svg { fill: none; stroke: #555; stroke-width: 2; margin-left: 2px; }
.export { position: relative; }
.burger { display: flex; flex-direction: column; align-items: center; justify-content: center; gap: 4px; width: 48px; height: 44px; border-radius: 4px; background: #e6ebf5; }
.burger i { width: 34px; height: 6px; border-radius: 3px; background: #666; }
.menu {
  position: absolute; right: 1px; top: 43px; z-index: 2; width: 266px; height: 264px; padding-top: 10px;
  list-style: none; background: #fff; border: 2px solid #999; box-shadow: 6px 6px 16px rgba(0, 0, 0, .5);
  font: 22px "Roboto Condensed", Roboto, sans-serif; font-stretch: 75%; color: #333;
}
.menu li { height: 47px; line-height: 47px; padding-left: 21px; white-space: nowrap; }
.menu .rule { height: 4px; border-top: 2px solid #999; }
.menu .active { background: #435ba9; color: #fff; height: 46px; }

.chart { margin: 0; }
.grid { stroke: #e6e6e6; stroke-width: 2; }
.axis { fill: none; stroke: #ccd0e6; stroke-width: 2; }
.ticks { font: 21px "DejaVu Sans", sans-serif; fill: #666; }
.ticks.y { text-anchor: end; }
.ticks.x { text-anchor: middle; letter-spacing: .3px; }
.axis-title { font-size: 36px; text-anchor: middle; fill: #000; }
.series { fill: none; stroke: #4488c8; stroke-width: 2; stroke-linejoin: bevel; }
.nav-area { fill: #4488c8; fill-opacity: .06; }
.nav-line { fill: none; stroke: #4380c0; stroke-width: 2; }
.nav-grid { stroke: #e0e0e0; stroke-width: 2; }
.nav-years { font: 21.5px "DejaVu Sans", sans-serif; fill: #999; }
.nav-mask { fill: #6685c2; fill-opacity: .28; }
.nav-frame { fill: none; stroke: #ccc; stroke-width: 2; }
.nav-button rect { fill: #e6e6e6; stroke: #ccc; stroke-width: 2; }
.handle { fill: #f2f2f2; stroke: #999; stroke-width: 2; }

.chart-foot { display: flex; align-items: center; justify-content: space-between; height: 60px; margin: 20px 32px 0 79px; font-size: 24px; fill: #212121; }
.options { display: flex; align-items: center; gap: 15px; letter-spacing: 2px; }
.hint { display: flex; align-items: center; gap: 16px; letter-spacing: .8px; }
.actions { display: flex; justify-content: space-between; margin: 30px 32px 0 30px; padding-top: 32px; border-top: 2px solid #e2e2e2; }
.actions button { display: flex; align-items: center; gap: 26px; height: 72px; padding: 0 31px; border-radius: 8px; background: #fbebe7; color: #d8683c; fill: #dd6537; font-size: 28px; letter-spacing: 2.5px; }

.corner { position: absolute; left: 0; bottom: 0; }
.notes { z-index: 3; fill: #ea431e; }
.note-text { font: bold 101px "Liberation Sans", Arial, sans-serif; }
```
FILE: chart.js
```js
const start = "342,685 356,648 358,662 361,690 380,1020 384,1065 391,1115 396,1112";
const seasons = [
  "558,1005,1118 565,905,1000 572,830,945 578,740,855 584,530,700 592,540,720 598,540,755 601,517,700 606,600,800 612,650,760 617,850,920 624,920,960 628,1100,1235 632,1110,1160",
  "678,1090,1247 683,880,1020 688,840,960 693,740,925 698,745,950 703,655,840 709,600,760 714,560,710 719,570,712 724,600,705 734,745,750 742,820,1000 750,1000,1200 755,1060,1190 759,1130,1265",
  "799,1080,1163 804,890,1030 810,910,1035 816,820,1005 823,680,850 830,560,735 835,490,670 841,495,680 847,550,690 853,600,720 858,720,890 865,940,1150 872,1030,1150 878,1110,1290 882,1130,1348",
  "919,1020,1147 925,910,1020 931,800,1030 935,850,1060 940,640,860 946,555,720 952,560,710 957,490,640 961,487,660 966,590,735 972,630,740 977,650,760 984,810,960 990,990,1130 996,940,1110 1002,1040,1240",
  "1043,1100,1224 1050,890,1085 1055,760,1015 1062,660,840 1068,610,828 1075,570,828 1082,467,640 1088,530,735 1094,580,780 1100,655,830 1106,800,940 1113,950,1080 1118,1080,1270 1124,1170,1350",
  "1168,1000,1110 1175,800,1024 1182,850,930 1188,600,840 1195,530,720 1201,502,665 1207,530,690 1214,580,710 1219,650,835 1226,810,905 1234,940,1110 1240,1050,1220 1244,1200,1340",
  "1291,1000,1115 1296,820,970 1304,700,915 1312,640,800 1320,600,775 1327,500,700 1333,476,690 1339,600,730 1346,730,850 1352,880,1030 1360,960,1080 1366,1040,1130 1370,1090,1173",
  "1410,920,1050 1417,830,1000 1425,640,880 1432,580,808 1440,467,680 1447,540,670 1454,540,700 1459,495,740 1466,600,805 1472,700,950 1479,900,1090 1485,1000,1120 1490,1140,1250 1494,1300,1333",
  "1536,980,1080 1542,860,980 1548,660,950 1556,600,840 1562,560,690 1568,463,660 1575,520,690 1582,560,690 1588,620,800 1594,880,990 1602,1000,1130 1608,1060,1205",
  "1656,820,1045 1664,760,1000 1671,630,860 1678,515,730 1685,520,680 1691,476,700 1696,490,660 1702,540,650 1709,680,770 1716,800,880 1722,900,1100 1728,1040,1170 1735,1140,1260",
  "1782,860,1035 1788,760,900 1795,590,930 1802,560,800 1808,416,730 1814,560,610 1820,580,720 1827,565,720 1836,740,830 1844,830,930 1850,1080,1110",
  "1906,930,1072 1914,740,910 1922,650,820 1930,525,690 1936,600,690 1942,560,705 1949,557,680 1958,740,840 1966,860,980 1972,1040,1160 1976,1070,1283",
  "2028,900,1060 2036,730,910 2044,630,860 2052,550,700 2060,516,700 2066,540,680 2074,540,680 2082,740,850 2090,880,1010 2097,980,1168 2104,1130,1170",
  "2143,1008,1198 2151,890,1015 2160,660,870 2168,600,760 2176,500,660 2182,500,655 2189,505,660 2196,590,700 2204,800,830 2212,860,1075 2218,1020,1100 2226,1150,1217",
  "2273,900,1015 2281,740,990 2288,610,840 2296,580,800 2303,528,710 2310,600,750 2318,690,800 2324,630,800 2332,760,900 2339,940,1130 2346,1130,1220",
  "2392,990,1155 2400,790,920 2408,720,840 2414,600,830 2420,500,700 2428,500,700 2436,560,700 2442,680,740 2450,760,930 2458,1050,1120 2463,1100,1267",
  "2518,900,1030 2526,820,940 2533,700,820 2540,600,760 2548,500,690 2556,500,700 2564,650,760 2572,800,950 2578,900,1020 2585,1140,1300 2591,1150,1328",
  "2644,880,1025 2650,720,870 2658,650,830 2668,500,700 2678,500,690 2686,640,760 2692,790,870 2700,880,980 2706,950,1150 2714,1120,1250",
  "2757,960,1090 2764,840,950 2771,700,920 2778,600,850 2788,500,690 2798,500,680 2806,580,700 2814,720,840 2821,800,960 2828,960,1130 2837,1130,1222",
  "2881,950,1060 2888,830,1000 2895,720,860 2903,600,740 2912,500,740 2922,500,680 2930,640,760 2938,820,920 2946,840,940 2952,900,1255 2957,1100,1180"
];
// Readings on either side of each winter gap.
const springs = [1015, 1247, 1163, 1147, 1184, 1110, 1090, 1010, 1050, 1015, 1000, 1070, 1045, 1133, 940, 1145, 960, 980, 1090, 1040];
const winters = [1150, 1190, 1248, 1167, 1290, 1270, 1173, 1333, 1090, 1185, 1249, 1170, 1133, 1200, 1195, 1210, 1240, 1200, 1170, 1100];

let seed = 7;
const rnd = () => (seed = (seed * 16807) % 2147483647) / 2147483647;
const parse = s => s.split(" ").map(p => p.split(",").map(Number));
const px = (x, y) => (x / 2.0103).toFixed(1) + " " + (540 + y / 1.96).toFixed(1);

const pts = parse(start).map(([x, y]) => px(x, y));
seasons.forEach((season, n) => {
  const k = parse(season);
  pts.push(px(k[0][0] - 2, springs[n]));
  for (let i = 0; i < k.length; i++) {
    const [x, t, b] = k[i];
    const rising = i < k.length / 2;
    pts.push(rising ? px(x, b) : px(x, t), rising ? px(x, t) : px(x, b));
    if (i === k.length - 1) { pts.push(px(x + (n === 10 ? 10 : 2), winters[n])); break; }
    const [x2, t2, b2] = k[i + 1];
    let jt = 0, jb = 0, c = 0;
    for (let s = 1.3; s < x2 - x - .5; s += 1.3) {
      const f = s / (x2 - x);
      const top = t + (t2 - t) * f, bot = b + (b2 - b) * f, h = bot - top;
      if (c++ % 2 === 0) { jt = rnd() * .2; jb = rnd() * .2; }
      pts.push(px(x + s, top + h * jt), px(x + s + .5, bot - h * jb));
    }
  }
});
document.getElementById("series").setAttribute("d", "M" + pts.join("L"));

// Navigator overview, smoothed.
const overview = parse("400,378 413,370 430,470 440,495 520,493 600,486 605,480 617,420 626,370 640,364 647,390 654,395 660,430 668,500 690,506 715,506 727,432 735,432 745,378 754,370 763,378 780,450 795,510 815,500 845,460 860,370 868,356 880,370 888,410 898,480 910,517 930,508 950,485 958,455 965,445 975,370 984,356 992,370 1003,400 1016,478 1024,485 1030,508 1048,517 1063,517 1070,480 1080,410 1090,395 1098,390 1104,356 1116,398 1124,410 1145,522 1165,510 1185,480 1195,440 1205,390 1217,358 1230,375 1240,430 1250,475 1266,542 1280,530 1300,480 1315,425 1335,370 1342,358 1350,370 1362,430 1372,480 1381,495 1400,487 1423,460 1435,400 1448,362 1457,358 1462,378 1469,382 1480,450 1495,498 1515,488 1542,460 1553,400 1568,354 1582,372 1590,420 1602,480 1618,495 1635,487 1650,465 1657,444 1663,440 1670,390 1680,357 1696,355 1705,410 1715,450 1730,514 1745,500 1775,445 1790,390 1803,335 1809,375 1817,378 1822,405 1832,440 1842,500 1850,532 1865,525 1888,480 1900,410 1910,375 1917,365 1924,373 1932,372 1945,430 1962,512 1985,505 2003,480 2015,430 2025,390 2040,361 2052,362 2065,440 2072,465 2080,497 2120,492 2132,430 2140,400 2158,354 2170,385 2185,440 2200,523 2220,502 2240,465 2250,410 2262,380 2273,370 2282,385 2288,398 2295,402 2305,460 2313,509 2335,508 2355,498 2365,430 2375,390 2385,353 2396,353 2405,400 2418,455 2430,518 2455,500 2478,465 2490,410 2503,356 2518,370 2530,430 2537,450 2550,538 2562,535 2580,490 2598,455 2608,390 2624,352 2640,375 2655,440 2665,506 2690,488 2711,465 2720,410 2735,370 2745,357 2758,375 2770,430 2785,510 2805,502 2828,468 2838,410 2848,390 2860,354 2867,354 2875,390 2883,430 2892,470 2900,503");
const nx = ([x, y]) => [x / 2.0103, 1340 + y / 3];
const nav = overview.map(nx);
let d = "M" + nav[0].join(" ");
for (let i = 0; i < nav.length - 1; i++) {
  const a = nav[Math.max(i - 1, 0)], b = nav[i], c = nav[i + 1], e = nav[Math.min(i + 2, nav.length - 1)];
  const k = Math.min(1 / 6, (c[0] - b[0]) / 60 + .05);
  d += `C${b[0] + (c[0] - a[0]) * k} ${b[1] + (c[1] - a[1]) * k} ${c[0] - (e[0] - b[0]) * k} ${c[1] - (e[1] - b[1]) * k} ${c[0]} ${c[1]}`;
}
document.getElementById("nav-line").setAttribute("d", d);
document.getElementById("nav-area").setAttribute("d", d + "V1524H198Z");

// Each road gets a darker casing beneath the whole network.
const roads = document.getElementById("roads");
const casing = roads.cloneNode(true);
casing.removeAttribute("id");
casing.querySelectorAll(".road").forEach(r => r.classList.add("case"));
roads.before(casing);
```
